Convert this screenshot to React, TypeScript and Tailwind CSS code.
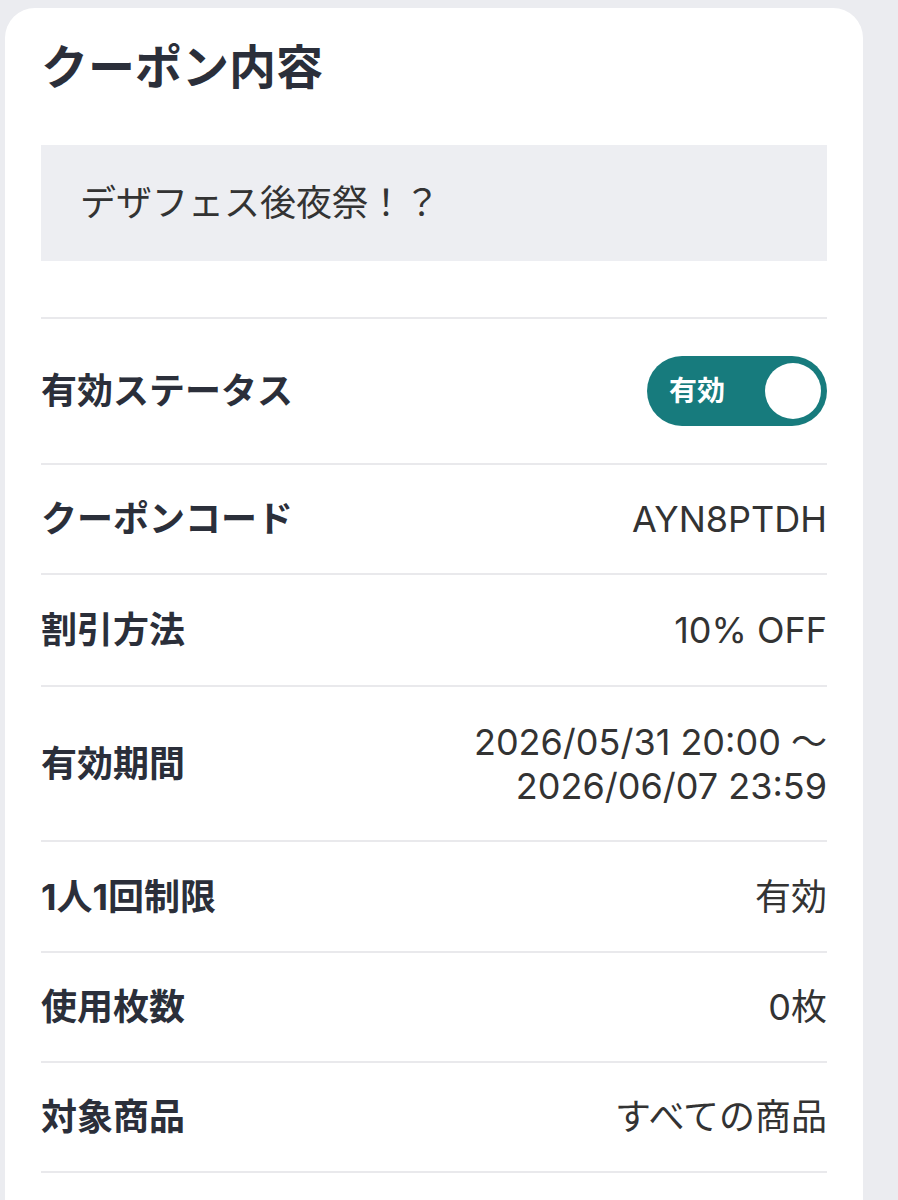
import React from 'react';

const font = { fontFamily: '"Inter", "Noto Sans CJK JP", sans-serif' };

function Row({ label, children, h }: { label: string; children: React.ReactNode; h: string }) {
    return (
        <div className={`flex items-center justify-between border-t-2 border-[#e9e9ec] ${h}`}>
            <div className="text-[36px] font-bold text-[#2b2f3a] leading-[44px]">{label}</div>
            <div className="text-[36px] text-[#333] leading-[44px] text-right">{children}</div>
        </div>
    );
}

export default function App() {
    return (
        <div className="min-h-[1200px] bg-[#ebecf0] pl-[5px] pr-[35px] pt-[8px]" style={font}>
            <div className="bg-white rounded-t-[30px] px-[36px] pt-[26px] min-h-[1192px]">
                <h1 className="text-[47px] font-bold text-[#2b2f3a] leading-[66px]">クーポン内容</h1>

                <div className="mt-[45px] h-[116px] bg-[#edeef2] flex items-center pl-[39px] text-[36px] text-[#333]">
                    デザフェス後夜祭！？
                </div>

                <div className="mt-[56px] border-b-2 border-[#e9e9ec]">
                    <Row label="有効ステータス" h="h-[146px]">
                        <div className="flex items-center justify-between w-[180px] h-[70px] rounded-full bg-[#177b7d] pl-[22px] pr-[6px]">
                            <span className="text-[28px] font-bold text-white">有効</span>
                            <span className="w-[56px] h-[56px] rounded-full bg-white" />
                        </div>
                    </Row>
                    <Row label="クーポンコード" h="h-[110px]">AYN8PTDH</Row>
                    <Row label="割引方法" h="h-[112px]">10% OFF</Row>
                    <Row label="有効期間" h="h-[155px]">
                        <div>2026/05/31 20:00 ～</div>
                        <div>2026/06/07 23:59</div>
                    </Row>
                    <Row label="1人1回制限" h="h-[111px]">有効</Row>
                    <Row label="使用枚数" h="h-[110px]">0枚</Row>
                    <Row label="対象商品" h="h-[110px]">すべての商品</Row>
                </div>
            </div>
        </div>
    );
}
